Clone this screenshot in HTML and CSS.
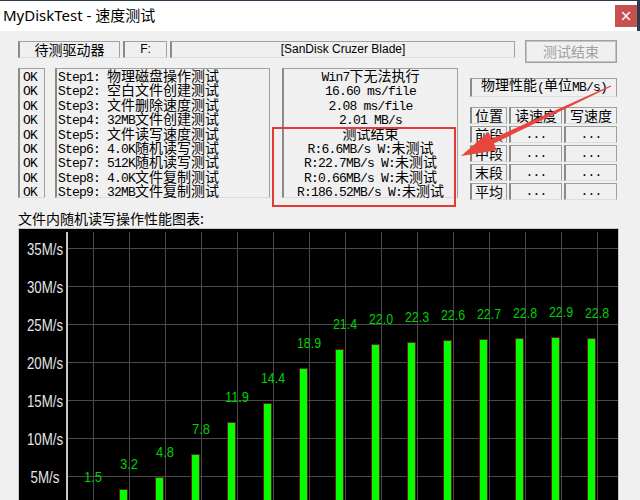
FILE: index.html
```html
<!DOCTYPE html>
<html lang="zh-CN">
<head>
<meta charset="utf-8">
<title>MyDiskTest - 速度测试</title>
<link rel="stylesheet" href="styles.css">
</head>
<body>
<div class="window">
  <div class="titlebar">
    <span class="title">MyDiskTest - 速度测试</span>
    <span class="close">×</span>
  </div>
  <div class="client">
    <div class="row1">
      <div class="box b1 cn">待测驱动器</div>
      <div class="box b2 lat">F:</div>
      <div class="box b3 lat">[SanDisk Cruzer Blade]</div>
      <div class="btn cn">测试结束</div>
    </div>
    <div class="row2">
      <div class="box okbox mono">
        <div class="ln">OK</div><div class="ln">OK</div><div class="ln">OK</div>
        <div class="ln">OK</div><div class="ln">OK</div><div class="ln">OK</div>
        <div class="ln">OK</div><div class="ln">OK</div><div class="ln">OK</div>
      </div>
      <div class="box steps mono">
        <div class="ln">Step1: <span class="c">物理磁盘操作测试</span></div>
        <div class="ln">Step2: <span class="c">空白文件创建测试</span></div>
        <div class="ln">Step3: <span class="c">文件删除速度测试</span></div>
        <div class="ln">Step4: 32MB<span class="c">文件创建测试</span></div>
        <div class="ln">Step5: <span class="c">文件读写速度测试</span></div>
        <div class="ln">Step6: 4.0K<span class="c">随机读写测试</span></div>
        <div class="ln">Step7: 512K<span class="c">随机读写测试</span></div>
        <div class="ln">Step8: 4.0K<span class="c">文件复制测试</span></div>
        <div class="ln">Step9: 32MB<span class="c">文件复制测试</span></div>
      </div>
      <div class="box results mono">
        <div class="ln">Win7<span class="c">下无法执行</span></div>
        <div class="ln">16.60 ms/file</div>
        <div class="ln">2.08 ms/file</div>
        <div class="ln">2.01 MB/s</div>
        <div class="ln"><span class="c">测试结束</span></div>
        <div class="ln">R:6.6MB/s W:<span class="c">未测试</span></div>
        <div class="ln">R:22.7MB/s W:<span class="c">未测试</span></div>
        <div class="ln">R:0.66MB/s W:<span class="c">未测试</span></div>
        <div class="ln">R:186.52MB/s W:<span class="c">未测试</span></div>
      </div>
      <div class="phys">
        <div class="box physhead mono"><span class="c">物理性能</span>(<span class="c">单位</span>MB/s)</div>
        <div class="ptable">
          <div class="box cell cn"><span class="t">位置</span></div><div class="box cell cn"><span class="t">读速度</span></div><div class="box cell cn"><span class="t">写速度</span></div>
          <div class="box cell cn"><span class="t">前段</span></div><div class="box cell mono">...</div><div class="box cell mono">...</div>
          <div class="box cell cn"><span class="t">中段</span></div><div class="box cell mono">...</div><div class="box cell mono">...</div>
          <div class="box cell cn"><span class="t">末段</span></div><div class="box cell mono">...</div><div class="box cell mono">...</div>
          <div class="box cell cn"><span class="t">平均</span></div><div class="box cell mono">...</div><div class="box cell mono">...</div>
        </div>
      </div>
    </div>
    <div class="chartlabel">文件内随机读写操作性能图表:</div>
    <div class="chart">
      <svg class="plot" width="599" height="279" viewBox="0 0 599 279">
        <g transform="translate(-19 -229)">
          <g class="grid">
            <line x1="68" y1="248.5" x2="620" y2="248.5"/>
            <line x1="68" y1="286.5" x2="620" y2="286.5"/>
            <line x1="68" y1="324.5" x2="620" y2="324.5"/>
            <line x1="68" y1="362.5" x2="620" y2="362.5"/>
            <line x1="68" y1="400.5" x2="620" y2="400.5"/>
            <line x1="68" y1="438.5" x2="620" y2="438.5"/>
            <line x1="68" y1="476.5" x2="620" y2="476.5"/>
            <line x1="93.5" y1="232" x2="93.5" y2="520"/>
            <line x1="129.5" y1="232" x2="129.5" y2="520"/>
            <line x1="165.5" y1="232" x2="165.5" y2="520"/>
            <line x1="201.5" y1="232" x2="201.5" y2="520"/>
            <line x1="237.5" y1="232" x2="237.5" y2="520"/>
            <line x1="273.5" y1="232" x2="273.5" y2="520"/>
            <line x1="309.5" y1="232" x2="309.5" y2="520"/>
            <line x1="345.5" y1="232" x2="345.5" y2="520"/>
            <line x1="381.5" y1="232" x2="381.5" y2="520"/>
            <line x1="417.5" y1="232" x2="417.5" y2="520"/>
            <line x1="453.5" y1="232" x2="453.5" y2="520"/>
            <line x1="489.5" y1="232" x2="489.5" y2="520"/>
            <line x1="525.5" y1="232" x2="525.5" y2="520"/>
            <line x1="561.5" y1="232" x2="561.5" y2="520"/>
            <line x1="597.5" y1="232" x2="597.5" y2="520"/>
          </g>
          <line class="axis" x1="67" y1="232" x2="67" y2="520"/>
          <g class="ylab">
            <text x="45" y="255" textLength="36" lengthAdjust="spacingAndGlyphs">35M/s</text>
            <text x="45" y="293" textLength="36" lengthAdjust="spacingAndGlyphs">30M/s</text>
            <text x="45" y="331" textLength="36" lengthAdjust="spacingAndGlyphs">25M/s</text>
            <text x="45" y="369" textLength="36" lengthAdjust="spacingAndGlyphs">20M/s</text>
            <text x="45" y="407" textLength="36" lengthAdjust="spacingAndGlyphs">15M/s</text>
            <text x="45" y="445" textLength="36" lengthAdjust="spacingAndGlyphs">10M/s</text>
            <text x="45" y="483" textLength="29" lengthAdjust="spacingAndGlyphs">5M/s</text>
          </g>
          <g class="bars">
            <rect x="83.5" y="502.5" width="8" height="30"/>
            <rect x="119.5" y="489.5" width="8" height="40"/>
            <rect x="155.5" y="477.5" width="8" height="50"/>
            <rect x="191.5" y="454.5" width="8" height="70"/>
            <rect x="227.5" y="422.5" width="8" height="100"/>
            <rect x="263.5" y="403.5" width="8" height="120"/>
            <rect x="299.5" y="368.5" width="8" height="150"/>
            <rect x="335.5" y="349.5" width="8" height="170"/>
            <rect x="371.5" y="344.5" width="8" height="180"/>
            <rect x="407.5" y="342.5" width="8" height="180"/>
            <rect x="443.5" y="340.5" width="8" height="180"/>
            <rect x="479.5" y="339.5" width="8" height="180"/>
            <rect x="515.5" y="338.5" width="8" height="180"/>
            <rect x="551.5" y="337.5" width="8" height="180"/>
            <rect x="587.5" y="338.5" width="8" height="180"/>
          </g>
          <g class="vlab">
            <text x="93" y="482" textLength="18" lengthAdjust="spacingAndGlyphs">1.5</text>
            <text x="129" y="469" textLength="18" lengthAdjust="spacingAndGlyphs">3.2</text>
            <text x="165" y="457" textLength="18" lengthAdjust="spacingAndGlyphs">4.8</text>
            <text x="201" y="434" textLength="18" lengthAdjust="spacingAndGlyphs">7.8</text>
            <text x="237" y="402" textLength="24" lengthAdjust="spacingAndGlyphs">11.9</text>
            <text x="273" y="383" textLength="24" lengthAdjust="spacingAndGlyphs">14.4</text>
            <text x="309" y="348" textLength="24" lengthAdjust="spacingAndGlyphs">18.9</text>
            <text x="345" y="329" textLength="24" lengthAdjust="spacingAndGlyphs">21.4</text>
            <text x="381" y="324" textLength="24" lengthAdjust="spacingAndGlyphs">22.0</text>
            <text x="417" y="322" textLength="24" lengthAdjust="spacingAndGlyphs">22.3</text>
            <text x="453" y="320" textLength="24" lengthAdjust="spacingAndGlyphs">22.6</text>
            <text x="489" y="319" textLength="24" lengthAdjust="spacingAndGlyphs">22.7</text>
            <text x="525" y="318" textLength="24" lengthAdjust="spacingAndGlyphs">22.8</text>
            <text x="561" y="317" textLength="24" lengthAdjust="spacingAndGlyphs">22.9</text>
            <text x="597" y="318" textLength="24" lengthAdjust="spacingAndGlyphs">22.8</text>
          </g>
        </g>
      </svg>
    </div>
  </div>
  <svg class="annot" width="640" height="500" viewBox="0 0 640 500">
    <rect class="redbox" x="273" y="128" width="182" height="78"/>
    <polygon class="arrow" points="610.8,85.5 491.6,138.9 488.5,132.1 461,156 496.9,150.3 493.8,143.5 611.2,86.5"/>
  </svg>
</div>
</body>
</html>
```

FILE: styles.css
```css
html, body {
  margin: 0;
  padding: 0;
}
body {
  background: #f0f0f0;
  width: 640px;
  height: 500px;
  overflow: hidden;
  font-family: "Noto Sans CJK SC", sans-serif;
  color: #000;
}
.window {
  position: relative;
  width: 640px;
  height: 500px;
  overflow: hidden;
}
.titlebar {
  height: 31px;
  box-sizing: border-box;
  background: #fff;
  border-top: 1px solid #2b3b4b;
  border-right: 3px solid #2b3b4b;
  display: flex;
  justify-content: space-between;
  align-items: flex-start;
}
.title {
  font-family: "Noto Sans", "Noto Sans CJK SC", sans-serif;
  font-size: 15px;
  line-height: 28px;
  padding-left: 3px;
}
.close {
  width: 22px;
  height: 22px;
  margin-top: 4px;
  background: #c75050;
  color: #fff;
  text-align: center;
  font-family: "DejaVu Sans", sans-serif;
  font-size: 15px;
  line-height: 22px;
}
.client {
  padding: 9px 23px 0 18px;
}
.box {
  box-sizing: border-box;
  border: 1px solid #a0a0a0;
  border-left: 2px solid #8a8a8a;
  border-bottom-color: #dcdcdc;
}
.cn {
  font-family: "Noto Sans CJK SC", sans-serif;
  font-size: 14px;
}
.lat {
  font-family: "Liberation Sans", sans-serif;
  font-size: 12px;
}
.mono {
  font-family: "Liberation Mono", monospace;
  font-size: 13px;
  letter-spacing: -0.8px;
}
.mono .c {
  display: inline-block;
  height: 14.4px;
  line-height: 9.1px;
  vertical-align: top;
  font-family: "Noto Sans CJK SC", sans-serif;
  font-size: 14px;
  letter-spacing: 0;
}
.ln {
  height: 14.4px;
  line-height: 14.4px;
  white-space: pre;
}
.row1 {
  display: flex;
  height: 23px;
}
.row1 .box {
  height: 17px;
  margin-top: 1px;
  margin-right: 3px;
  text-align: center;
  line-height: 15px;
}
.b1 { width: 102px; }
.b2 { width: 44px; }
.b3 { width: 345px; }
.row1 .b3 { margin-right: 10px; }
.btn {
  box-sizing: border-box;
  width: 92px;
  height: 23px;
  border: 1px solid #a0a0a0;
  box-shadow: inset 0 0 0 1px #c4c4c4;
  color: #a0a0a0;
  text-align: center;
  line-height: 20px;
}
.row2 {
  display: flex;
  margin-top: 5px;
  height: 132px;
}
.okbox {
  width: 27px;
  height: 130px;
  padding: 2px 0 0 3px;
}
.steps {
  width: 215px;
  height: 130px;
  margin-left: 10px;
  padding: 2px 0 0 1px;
}
.results {
  width: 176px;
  height: 130px;
  margin-left: 12px;
  padding-top: 2px;
  text-align: center;
}
.phys {
  width: 147px;
  margin-left: 12px;
}
.physhead {
  margin-top: 10px;
  height: 19px;
  line-height: 17px;
  text-align: center;
  white-space: pre;
}
.physhead .c {
  height: 17px;
  line-height: 11.7px;
}
.ptable {
  margin-top: 10px;
  display: grid;
  grid-template-columns: 37px 53px 53px;
  grid-auto-rows: 17px;
  gap: 2px;
}
.cell {
  text-align: center;
  line-height: 15px;
}
.cell .t {
  display: inline-block;
  height: 15px;
  line-height: 15px;
  vertical-align: top;
}
.chartlabel {
  margin-top: 10px;
  height: 16px;
  line-height: 16px;
  font-size: 14px;
}
.chart {
  margin-top: 2px;
  width: 601px;
  height: 280px;
  box-sizing: border-box;
  background: #000;
  border: 1px solid #c8c8c8;
  border-bottom: none;
}
.plot {
  display: block;
}
.grid line {
  stroke: #4a4a4a;
  stroke-width: 1;
}
.axis {
  stroke: #c8c8c8;
  stroke-width: 2;
}
.ylab text {
  fill: #e4e4e4;
  font-family: "Liberation Sans", sans-serif;
  font-size: 16px;
  text-anchor: middle;
}
.bars rect {
  fill: #00ff00;
  stroke: #6a1818;
  stroke-width: 1;
}
.vlab text {
  fill: #00d000;
  font-family: "Liberation Sans", sans-serif;
  font-size: 15px;
  text-anchor: middle;
}
.annot {
  position: absolute;
  top: 0;
  left: 0;
  pointer-events: none;
}
.redbox {
  fill: none;
  stroke: #e53935;
  stroke-width: 2;
}
.arrow {
  fill: #e8453c;
}
```
